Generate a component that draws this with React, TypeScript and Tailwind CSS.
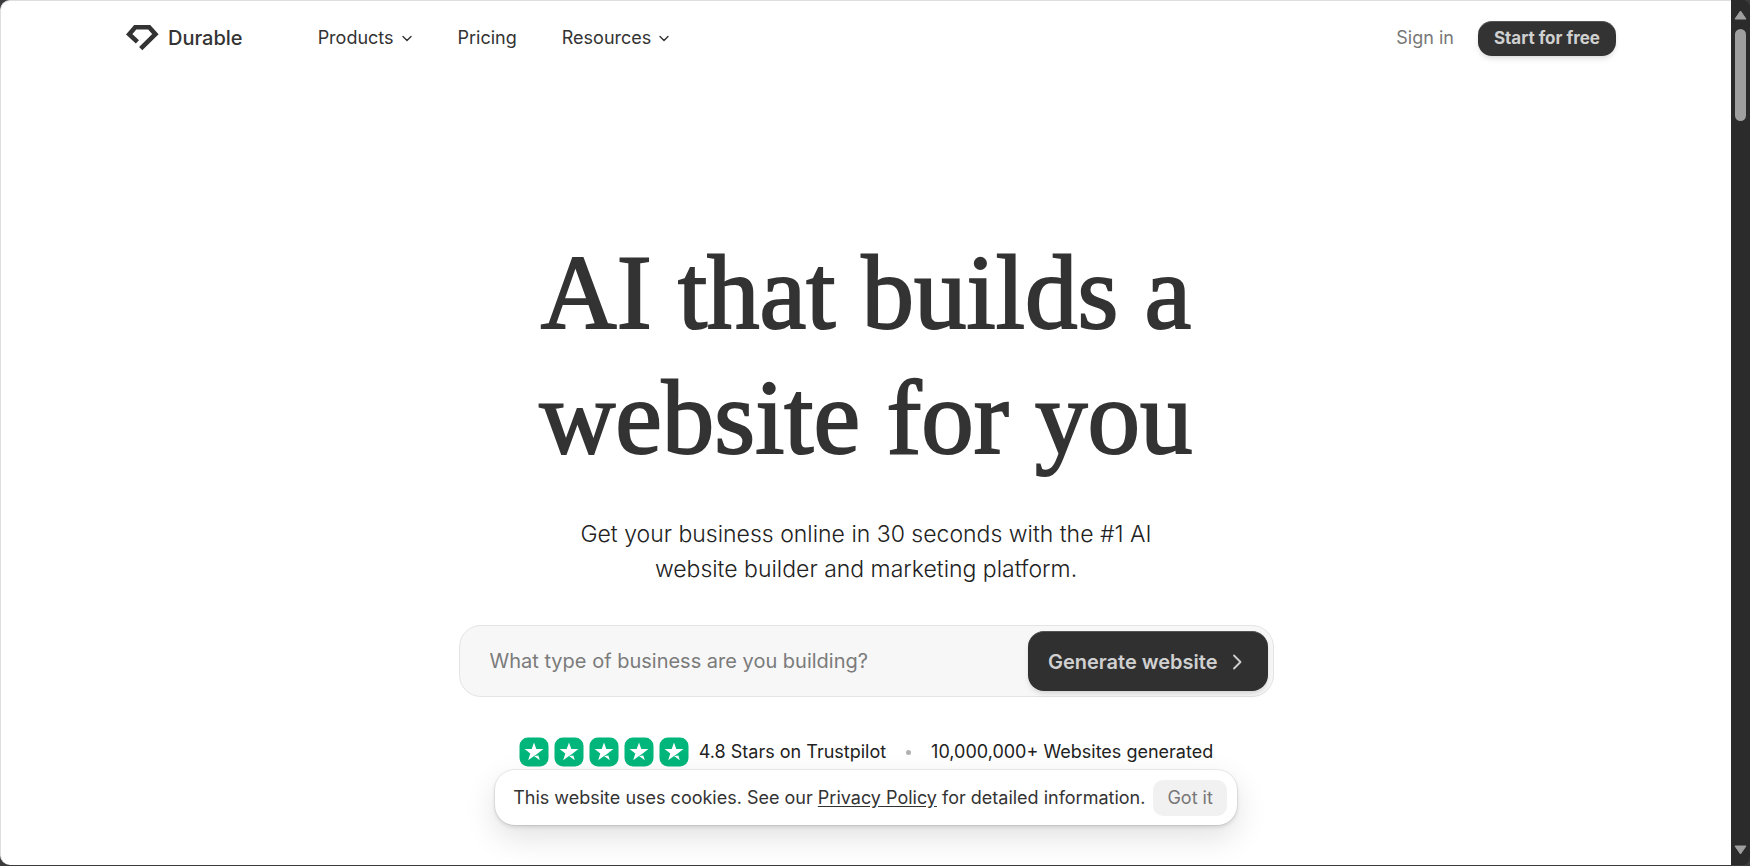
const stars = [1, 2, 3, 4, 5];

const Logo = () => (
  <svg width="34" height="28" viewBox="1 0 34 28" fill="none" aria-hidden="true">
    <path
      d="M12.4 17.9 L4.2 10.3 L10.2 3.3 H24.2 L30.4 10.1 L15.7 24.7"
      stroke="#333333"
      strokeWidth="4.6"
    />
  </svg>
);

const ChevronDown = () => (
  <svg width="12" height="12" viewBox="0 0 12 12" fill="none" aria-hidden="true">
    <path d="M2 4.5 L6 8.5 L10 4.5" stroke="#333333" strokeWidth="1.4" strokeLinecap="round" strokeLinejoin="round" />
  </svg>
);

const Star = () => (
  <svg width="30" height="30" viewBox="0 0 30 30" aria-hidden="true">
    <rect x="0.5" y="0.5" width="29" height="29" rx="8.5" fill="#00b67a" />
    <path d="M15 5.4 L17.3 12.1 H24.4 L18.7 16.4 L20.8 23.2 L15 19 L9.2 23.2 L11.3 16.4 L5.6 12.1 H12.7 Z" fill="#ffffff" />
    <path d="M19.5 18.6 L18.8 16.6 L15 19 Z" fill="#00b67a" />
  </svg>
);

const Navbar = () => (
  <header className="px-[115px] pt-[19px]">
    <div className="flex h-9 items-center justify-between">
      <div className="flex items-center">
        <a href="#home" className="ml-2.5 mr-[75px] flex items-center gap-2 text-xl font-medium">
          <Logo />
          Durable
        </a>
        <nav className="flex items-center gap-[45px] text-lg">
          <button type="button" className="flex items-center gap-[7px]">
            Products
            <ChevronDown />
          </button>
          <a href="#pricing">Pricing</a>
          <button type="button" className="flex items-center gap-[7px]">
            Resources
            <ChevronDown />
          </button>
        </nav>
      </div>
      <div className="flex items-center gap-6">
        <a href="#signin" className="text-lg text-[#777777]">Sign in</a>
        <a
          href="#start"
          className="flex h-[35px] items-center rounded-[14px] border-t border-[#555555] bg-[#333333] px-4 text-[17px] font-bold text-[#d0d0d0] shadow-md shadow-black/10"
        >
          Start for free
        </a>
      </div>
    </div>
  </header>
);

const Hero = () => (
  <section className="flex flex-col items-center pt-[174px] text-center">
    <h1 className="max-w-[760px] font-['Liberation_Serif',serif] text-[105px] leading-[125px] text-[#333333] [-webkit-text-stroke:2px_#333333]">
      AI that builds a website for you
    </h1>
    <p className="mt-[37px] max-w-[600px] text-[23px] leading-[35px] font-light text-[#222222]">
      Get your business online in 30 seconds with the #1 AI website builder and marketing platform.
    </p>
    <form className="mt-[38px] flex h-[72px] w-full max-w-[815px] items-center rounded-[22px] border border-[#e4e4e4] bg-[#f7f7f7] pl-[30px] pr-[5px]">
      <input
        type="text"
        aria-label="Business type"
        placeholder="What type of business are you building?"
        className="min-w-0 flex-1 bg-transparent text-xl outline-none placeholder:text-[#7b7b7b]"
      />
      <button
        type="button"
        className="flex h-[60px] items-center gap-2.5 rounded-2xl border-t border-[#555555] bg-[#303030] px-5 text-xl font-semibold text-[#d0d0d0] shadow-md shadow-black/10"
      >
        Generate website
        <svg width="20" height="20" viewBox="0 0 20 20" fill="none" aria-hidden="true">
          <path d="M6 3.5 L12.5 10 L6 16.5" stroke="#d0d0d0" strokeWidth="1.8" strokeLinecap="round" strokeLinejoin="round" />
        </svg>
      </button>
    </form>
    <div className="mt-10 flex items-center text-lg leading-[30px] text-[#222222]">
      <div className="mr-2.5 flex gap-[5px]">
        {stars.map((star) => (
          <Star key={star} />
        ))}
      </div>
      <span>4.8 Stars on Trustpilot</span>
      <span className="mx-5 h-[5px] w-[5px] rounded-full bg-[#b0b0b0]" />
      <span>10,000,000+ Websites generated</span>
    </div>
  </section>
);

const CookieBanner = () => (
  <div className="absolute inset-x-0 bottom-10 flex justify-center">
    <div className="flex h-[55px] items-center gap-2 rounded-[20px] bg-white px-[18px] pr-2.5 text-lg shadow-[0_0_0_1px_rgba(0,0,0,0.06),0_2px_4px_rgba(0,0,0,0.12),0_12px_32px_rgba(0,0,0,0.12)]">
      <p>
        This website uses cookies. See our{" "}
        <a href="#privacy" className="underline underline-offset-2">Privacy Policy</a> for detailed information.
      </p>
      <button type="button" className="h-9 rounded-[10px] bg-[#f1f1f1] px-[14px] text-[#777777]">
        Got it
      </button>
    </div>
  </div>
);

const Scrollbar = () => (
  <div className="flex w-[19px] shrink-0 flex-col items-center justify-between rounded-r-lg bg-[#2b2b2b] py-2.5" aria-hidden="true">
    <div className="flex flex-col items-center gap-[9px]">
      <svg width="13" height="10" viewBox="0 0 13 10">
        <path d="M6.5 1 L12 9 H1 Z" fill="#9f9f9f" stroke="#9f9f9f" strokeLinejoin="round" />
      </svg>
      <div className="h-[92px] w-[11px] rounded-full bg-[#9f9f9f]" />
    </div>
    <svg width="13" height="10" viewBox="0 0 13 10">
      <path d="M6.5 9 L1 1 H12 Z" fill="#9f9f9f" stroke="#9f9f9f" strokeLinejoin="round" />
    </svg>
  </div>
);

const App = () => {
  return (
    <div className="flex h-screen bg-[#3b3a3d] pb-px font-['Inter',sans-serif] text-[#333333]">
      <main className="relative min-w-0 flex-1 overflow-hidden rounded-l-[10px] border-l border-t border-[#dedede] bg-white">
        <Navbar />
        <Hero />
        <CookieBanner />
      </main>
      <Scrollbar />
    </div>
  );
};

export default App;
